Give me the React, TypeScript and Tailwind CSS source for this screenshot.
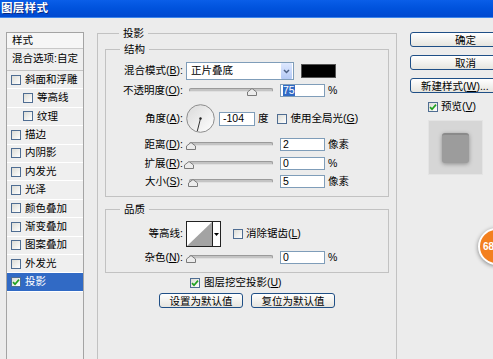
import type { ReactNode } from 'react';

const FONT = { fontFamily: '"Liberation Sans", "Noto Sans CJK SC", sans-serif' };

function Check({ on }: { on?: boolean }) {
  return (
    <span className="inline-flex w-[10px] h-[10px] shrink-0 items-center justify-center border border-[#4f6d92] bg-gradient-to-br from-[#dcdcd6] to-white">
      {on && (
        <svg width="8" height="8" viewBox="0 0 8 8">
          <path d="M1 4.2 L3 6.2 L7 1.6" stroke="#21a121" strokeWidth="1.7" fill="none" />
        </svg>
      )}
    </span>
  );
}

function Lbl({ text, k }: { text: string; k?: string }) {
  return (
    <span className="w-[77px] shrink-0 text-right">
      {text}
      {k && (
        <>
          (<span className="underline">{k}</span>)
        </>
      )}
      :
    </span>
  );
}

function Field({ value, sel }: { value: string; sel?: boolean }) {
  return (
    <div className="w-[45px] h-[13px] border border-[#7f9db9] bg-white pl-[2px] flex items-center leading-[11px]">
      {sel ? <span className="bg-[#316ac5] text-white">{value}</span> : value}
    </div>
  );
}

function Slider({ pos }: { pos: number }) {
  return (
    <div className="relative w-[84px] h-[12px] ml-[3px] shrink-0">
      <div className="absolute left-0 right-0 top-[3px] h-[4px] rounded-full bg-[#c4c4c4] border border-[#9a9a9a] border-b-[#e0e0e0]" />
      <svg className="absolute top-[3px]" style={{ left: pos - 5 }} width="10" height="8" viewBox="0 0 10 8">
        <path d="M0.5 7.5 V4 L5 0.5 L9.5 4 V7.5 Z" fill="#ececec" stroke="#7a7a7a" />
      </svg>
    </div>
  );
}

function SliderRow({ text, k, pos, value, unit, mt }: { text: string; k: string; pos: number; value: string; unit: string; mt: string }) {
  return (
    <div className={`flex items-center h-[13px] ${mt}`}>
      <Lbl text={text} k={k} />
      <div className="w-[3px]" />
      <Slider pos={pos} />
      <div className="w-[7px]" />
      <Field value={value} sel={value === '75'} />
      <span className="ml-[3px]">{unit}</span>
    </div>
  );
}

function Btn({ children, w, cls = 'justify-center' }: { children: ReactNode; w: string; cls?: string }) {
  return (
    <div className={`${w} h-[15px] shrink-0 flex items-center ${cls} rounded-[3px] border border-[#1f4f86] bg-gradient-to-b from-white to-[#e6e5df] leading-[12px] whitespace-nowrap`}>
      {children}
    </div>
  );
}

function Group({ title, children, cls }: { title: string; children: ReactNode; cls: string }) {
  return (
    <fieldset className={`border border-[#c2c2c2] ${cls}`}>
      <legend className="ml-[14px] px-[4px] leading-[14px]">{title}</legend>
      {children}
    </fieldset>
  );
}

const items: { name: string; indent?: boolean; on?: boolean }[] = [
  { name: '斜面和浮雕' },
  { name: '等高线', indent: true },
  { name: '纹理', indent: true },
  { name: '描边' },
  { name: '内阴影' },
  { name: '内发光' },
  { name: '光泽' },
  { name: '颜色叠加' },
  { name: '渐变叠加' },
  { name: '图案叠加' },
  { name: '外发光' },
  { name: '投影', on: true },
];

export default function App() {
  return (
    <div className="relative w-[493px] h-[359px] overflow-hidden bg-[#ececec] text-[10.5px] text-black" style={FONT}>
      <div className="h-[18px] bg-gradient-to-b from-[#0a5ee8] via-[#0052dc] to-[#0049d0] border-b border-[#3d86ec] pl-[1px] flex items-center">
        <span className="text-white font-bold text-[11.5px] tracking-[0.3px] [text-shadow:1px_1px_0_#0a2a80]">图层样式</span>
      </div>

      <div className="flex items-start">
        {/* style list */}
        <div className="ml-[6px] mt-[14px] w-[78px] h-[340px] shrink-0 border border-[#a4a4a4] bg-[#efefef]">
          <div className="h-[16px] px-[5px] flex items-center border-b border-[#c8c8c8] bg-[#f6f6f6]">样式</div>
          <div className="h-[22px] px-[5px] pt-[2px] border-b border-[#c4c4c4]">混合选项:自定</div>
          {items.map((it) => (
            <div
              key={it.name}
              className={`h-[18.4px] flex items-center gap-[4px] border-b border-white ${it.indent ? 'pl-[16px]' : 'pl-[4px]'} ${it.on ? 'bg-[#316ac5] text-white' : ''}`}
            >
              <Check on={it.on} />
              <span>{it.name}</span>
            </div>
          ))}
        </div>

        {/* main panel */}
        <Group title="投影" cls="ml-[13px] mt-[8px] w-[300px] h-[350px] shrink-0 px-[7px] pt-[2px]">
          <Group title="结构" cls="w-[284px] pb-[8px]">
            <div className="flex items-center h-[18px] mt-[6px]">
              <Lbl text="混合模式" k="B" />
              <div className="ml-[3px] w-[108px] h-[18px] border border-[#7f9db9] bg-white flex items-center">
                <span className="flex-1 pl-[4px]">正片叠底</span>
                <div className="w-[11px] h-[16px] mr-[1px] bg-gradient-to-b from-[#dfe9ff] to-[#b4c9f5] rounded-[1px] flex items-center justify-center">
                  <svg width="7" height="5" viewBox="0 0 7 5">
                    <path d="M1 1 L3.5 3.5 L6 1" stroke="#4d6185" strokeWidth="1.5" fill="none" />
                  </svg>
                </div>
              </div>
              <div className="ml-[7px] w-[35px] h-[14px] bg-black border border-[#555]" />
            </div>
            <SliderRow text="不透明度" k="O" pos={63} value="75" unit="%" mt="mt-[4px]" />
            <div className="flex items-center h-[29px] mt-[7px]">
              <Lbl text="角度" k="A" />
              <svg className="ml-[3px] shrink-0" width="29" height="29" viewBox="0 0 29 29">
                <defs>
                  <linearGradient id="dg" x1="0" y1="0" x2="1" y2="1">
                    <stop offset="0" stopColor="#d9d9d9" />
                    <stop offset="1" stopColor="#ffffff" />
                  </linearGradient>
                </defs>
                <circle cx="14.5" cy="14.5" r="13.8" fill="url(#dg)" stroke="#8d8d8d" />
                <line x1="14.5" y1="14.5" x2="11.3" y2="27" stroke="#333" strokeWidth="1" />
                <circle cx="14.5" cy="14.5" r="1.2" fill="#222" />
              </svg>
              <div className="ml-[4px] w-[36px] h-[14px] border border-[#7f9db9] bg-white pl-[3px] flex items-center">-104</div>
              <span className="ml-[3px]">度</span>
              <div className="ml-[8px] flex items-center gap-[4px]">
                <Check />
                <span>
                  使用全局光(<span className="underline">G</span>)
                </span>
              </div>
            </div>
            <SliderRow text="距离" k="D" pos={2} value="2" unit="像素" mt="mt-[5px]" />
            <SliderRow text="扩展" k="R" pos={0} value="0" unit="%" mt="mt-[6px]" />
            <SliderRow text="大小" k="S" pos={4} value="5" unit="像素" mt="mt-[5px]" />
          </Group>

          <Group title="品质" cls="w-[284px] mt-[5px] pb-[8px]">
            <div className="flex items-center h-[26px] mt-[5px]">
              <span className="w-[77px] shrink-0 text-right">等高线:</span>
              <div className="ml-[3px] w-[35px] h-[26px] border border-[#222] bg-white flex">
                <svg width="25" height="24" viewBox="0 0 25 24">
                  <polygon points="0,24 25,0 25,24" fill="#a3a3a3" />
                </svg>
                <div className="flex-1 border-l border-[#222] flex items-center justify-center">
                  <svg width="5" height="3" viewBox="0 0 5 3">
                    <polygon points="0,0 5,0 2.5,3" fill="#000" />
                  </svg>
                </div>
              </div>
              <div className="ml-[12px] flex items-center gap-[3px]">
                <Check />
                <span>
                  消除锯齿(<span className="underline">L</span>)
                </span>
              </div>
            </div>
            <SliderRow text="杂色" k="N" pos={2} value="0" unit="%" mt="mt-[4px]" />
          </Group>

          <div className="flex items-center gap-[4px] h-[10px] mt-[5px] pl-[85px]">
            <Check on />
            <span>
              图层挖空投影(<span className="underline">U</span>)
            </span>
          </div>
          <div className="flex gap-[8px] mt-[5px] pl-[54px]">
            <Btn w="w-[84px]">设置为默认值</Btn>
            <Btn w="w-[84px]">复位为默认值</Btn>
          </div>
        </Group>

        {/* right column */}
        <div className="ml-[13px] mt-[14px] w-[104px] shrink-0 flex flex-col">
          <Btn w="w-[104px]" cls="justify-start pl-[44px]">确定</Btn>
          <div className="h-[8px]" />
          <Btn w="w-[104px]" cls="justify-start pl-[44px]">取消</Btn>
          <div className="h-[8px]" />
          <Btn w="w-[104px]" cls="justify-start pl-[10px]">
            新建样式(<span className="underline">W</span>)...
          </Btn>
          <div className="flex items-center gap-[3px] ml-[18px] mt-[8px] h-[12px]">
            <Check on />
            <span>
              预览(<span className="underline">V</span>)
            </span>
          </div>
          <div className="ml-[18px] mt-[7px] w-[55px] h-[55px] bg-[#d6d6d6] border border-[#e4e4e4] flex items-center justify-center">
            <div className="w-[27px] h-[30px] rounded-[3px] bg-[#9c9c9c] border-t-2 border-[#8a8a8a] shadow-[0_1px_4px_rgba(0,0,0,0.35)]" />
          </div>
        </div>
      </div>

      <div className="absolute left-[478px] top-[228px] w-[37px] h-[37px] rounded-full bg-[#f3801f] border-2 border-white shadow-[0_1px_4px_rgba(0,0,0,0.45)] flex items-center pl-[3px]">
        <span className="text-white font-bold text-[10px]">68</span>
      </div>
    </div>
  );
}
